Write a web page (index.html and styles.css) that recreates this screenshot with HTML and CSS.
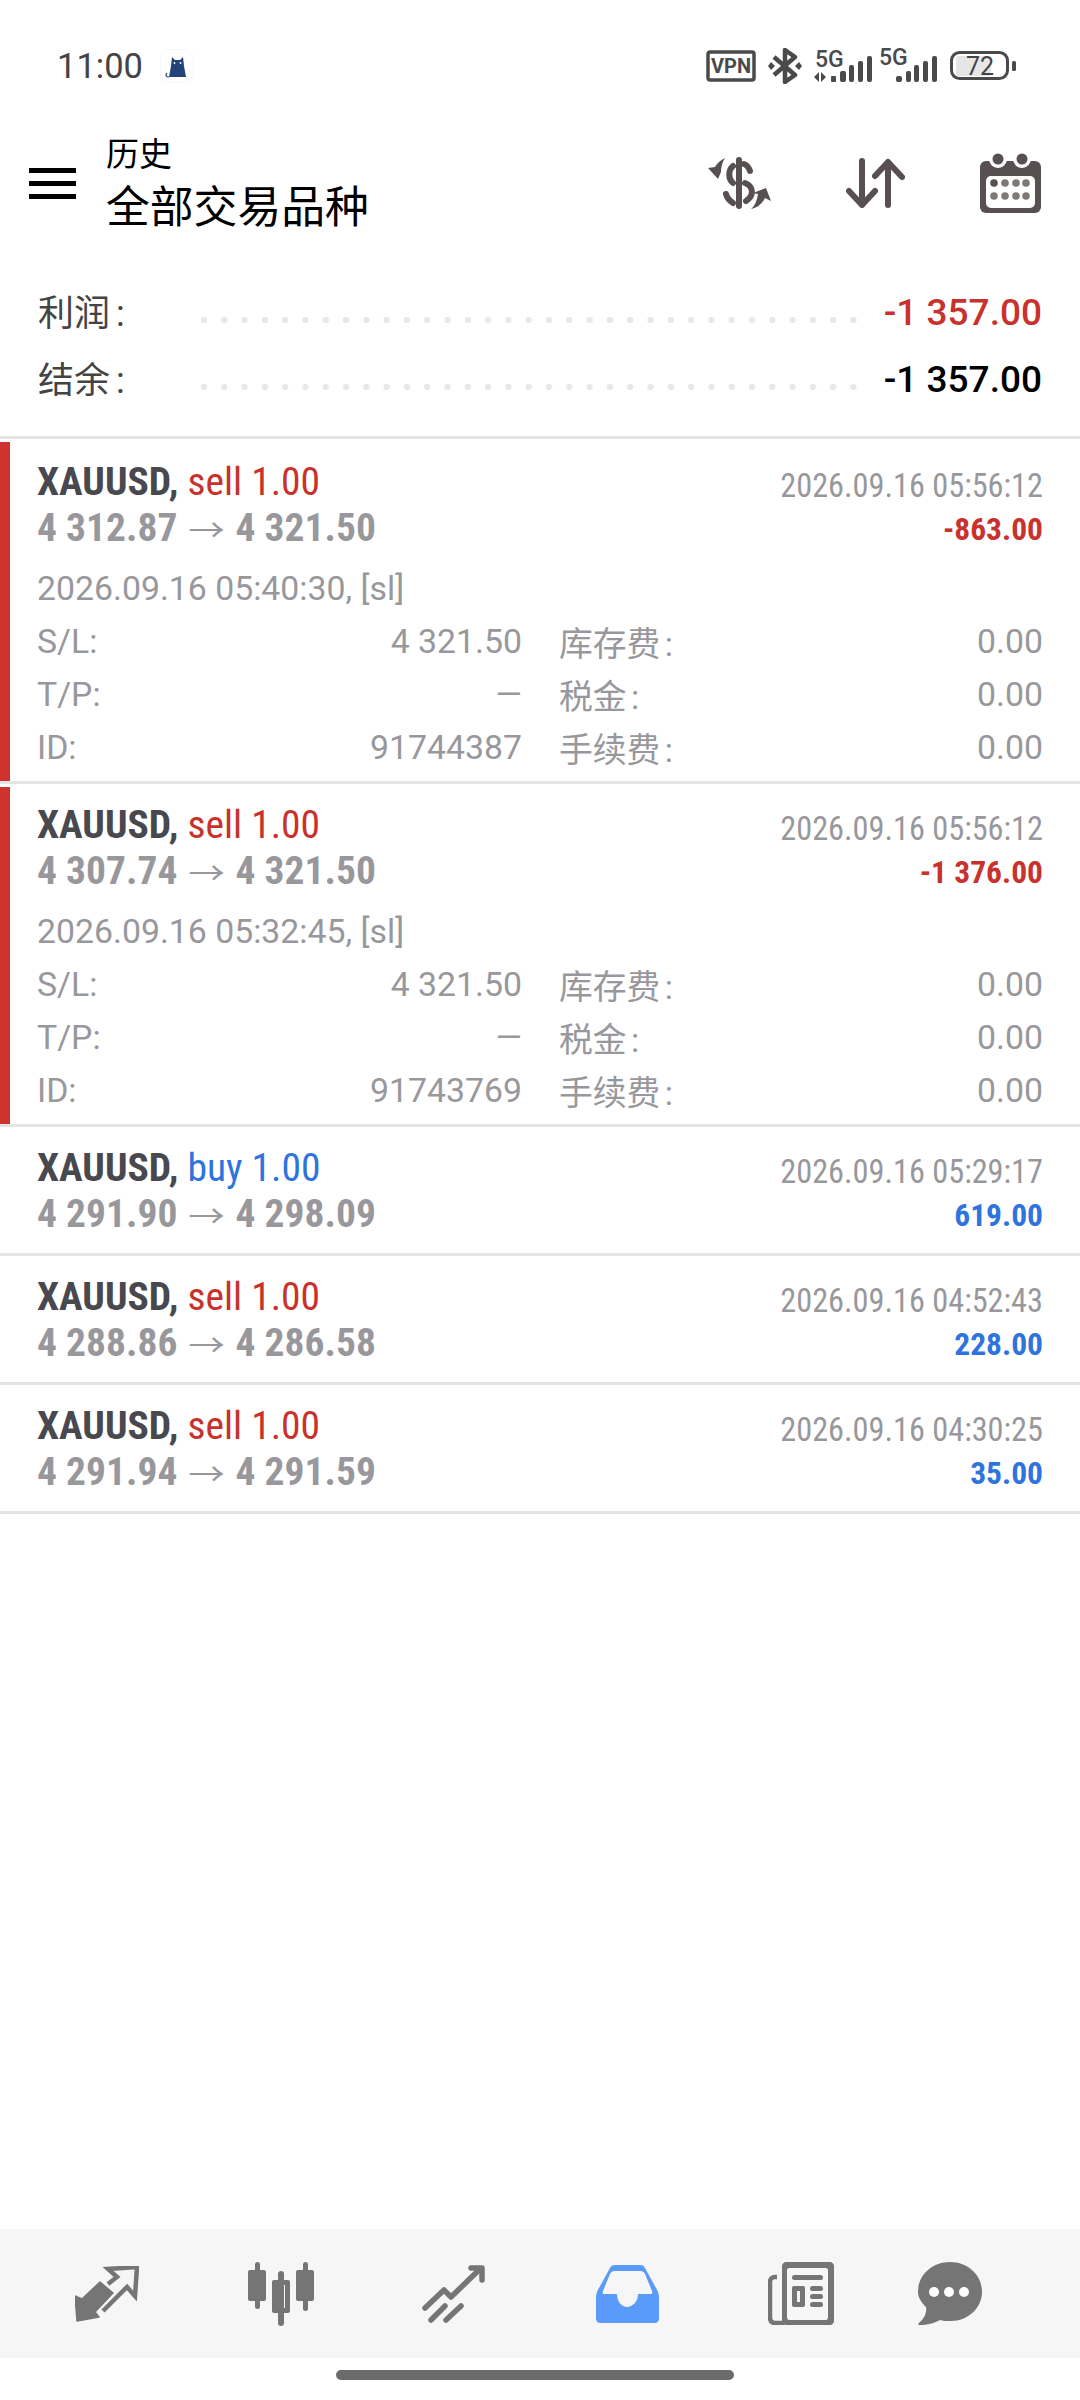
FILE: index.html
```html
<!DOCTYPE html>
<html lang="zh">
  <head>
    <meta charset="utf-8">
    <meta name="viewport" content="width=device-width,initial-scale=1.0">
    <title>历史</title>
    <link rel="stylesheet" href="styles.css">
  </head>
  <body>
    <div class="status-bar">
      <span class="clock">11:00</span>
      <svg class="cat" width="34" height="34" viewBox="0 0 34 34">
        <rect x="0.5" y="0.5" width="33" height="33" rx="10" fill="#fff" stroke="#f7f7f7"/>
        <path d="M12 8l3 3h5l3-3 1 9 2 11H9l2-11z" fill="#24427a"/>
        <path d="M9 28c-3 0-4-2-2-4" fill="none" stroke="#24427a" stroke-width="1.2"/>
        <circle cx="14.500" cy="14" r="0.900" fill="#fff"/>
        <circle cx="20.500" cy="14" r="0.900" fill="#fff"/>
      </svg>
      <div class="status-icons">
        <svg width="50" height="32" viewBox="0 0 50 32">
          <rect x="2" y="2" width="46" height="28" rx="2" fill="none" stroke="#4a4a4a" stroke-width="3.500"/>
          <text x="25" y="23" class="vpn-text" text-anchor="middle">VPN</text>
        </svg>
        <svg class="bt" width="34" height="36" viewBox="0 0 34 36">
          <path d="M6 9l21 18-10 7V2l10 7L6 27" fill="none" stroke="#4a4a4a" stroke-width="4.500" stroke-linejoin="round"/>
          <path d="M3 14l4 4-4 4-3-4zM31 14l3 4-3 4-4-4z" fill="#4a4a4a"/>
        </svg>
        <svg class="signal" width="60" height="44" viewBox="0 -6 60 44">
          <text x="2" y="17" class="sig-text">5G</text>
          <path d="M1 27l5-5v10zM8 22l5 5-5 5z" fill="#4a4a4a"/>
          <rect x="18" y="26" width="5" height="6" rx="1" fill="#4a4a4a"/>
          <rect x="27" y="21" width="6" height="11" rx="2" fill="#4a4a4a"/>
          <rect x="36" y="15" width="5" height="17" rx="2" fill="#4a4a4a"/>
          <rect x="45" y="11" width="5" height="21" rx="2" fill="#4a4a4a"/>
          <rect x="54" y="6" width="5" height="26" rx="2" fill="#4a4a4a"/>
        </svg>
        <svg class="signal" width="60" height="44" viewBox="0 -6 60 44">
          <text x="1" y="15" class="sig-text">5G</text>
          <rect x="18" y="26" width="6" height="6" rx="2" fill="#4a4a4a"/>
          <rect x="28" y="21" width="5" height="11" rx="2" fill="#4a4a4a"/>
          <rect x="36" y="15" width="5" height="17" rx="2" fill="#4a4a4a"/>
          <rect x="45" y="11" width="5" height="21" rx="2" fill="#4a4a4a"/>
          <rect x="54" y="6" width="5" height="26" rx="2" fill="#4a4a4a"/>
        </svg>
        <svg class="battery" width="66" height="30" viewBox="0 0 66 30">
          <rect x="6" y="5" width="35" height="20" rx="2" fill="#e6e6e6"/>
          <rect x="1.500" y="1.500" width="56" height="26" rx="8" fill="none" stroke="#4a4a4a" stroke-width="3"/>
          <rect x="62" y="10" width="4" height="10" rx="1.500" fill="#4a4a4a"/>
          <text x="30" y="24" class="bat-text" text-anchor="middle">72</text>
        </svg>
      </div>
    </div>

    <div class="toolbar">
      <div class="burger"><i></i><i></i><i></i></div>
      <div class="title-box">
        <div class="title-small">历史</div>
        <div class="title-big">全部交易品种</div>
      </div>
      <div class="toolbar-icons">
        <svg width="63" height="52" viewBox="0 0 63 52">
          <rect x="28" y="0" width="6" height="52" rx="3" fill="#585050"/>
          <g fill="none" stroke="#585050" stroke-width="6" stroke-linecap="round">
            <path d="M36 7c3 1 5 4 6 7"/>
            <path d="M25 9c-5 4-5 13 0 17"/>
            <path d="M37 26c8 3 10 12 1 18"/>
            <path d="M18 37c1 4 4 7 7 9"/>
          </g>
          <path d="M17 1C13 3 9 6 7 10L0 11l10 11 3-7c0-5 1-9 4-14zM43 52c4-3 6-9 7-15l-5-1 13-5 5 13-6-3c-3 6-8 10-14 11z" fill="#585050"/>
        </svg>
        <svg width="59" height="50" viewBox="0 0 59 50" class="sort-icon">
          <g fill="none" stroke="#585050" stroke-width="6" stroke-linecap="round" stroke-linejoin="round">
            <path d="M16 3v44M3 33l13 14 13-14"/>
            <path d="M42 47V4M29 18L42 4l14 15"/>
          </g>
        </svg>
        <svg width="61" height="60" viewBox="0 0 61 60">
          <rect x="0" y="8" width="61" height="52" rx="6" fill="#585050"/>
          <circle cx="18" cy="6" r="9" fill="#fff"/>
          <circle cx="42" cy="6" r="9" fill="#fff"/>
          <circle cx="18" cy="6" r="5.500" fill="#585050"/>
          <circle cx="42" cy="6" r="5.500" fill="#585050"/>
          <rect x="6" y="23" width="49" height="32" rx="5" fill="#fff"/>
          <circle cx="14" cy="30" r="3.800" fill="#585050"/>
          <g fill="#7f7976">
            <circle cx="25" cy="30" r="3.800"/><circle cx="36" cy="30" r="3.800"/><circle cx="46" cy="30" r="3.800"/>
            <circle cx="14" cy="43" r="3.800"/><circle cx="25" cy="43" r="3.800"/><circle cx="36" cy="43" r="3.800"/><circle cx="46" cy="43" r="3.800"/>
          </g>
        </svg>
      </div>
    </div>

    <div class="summary">
      <div class="summary-row">
        <span class="summary-label">利润 :</span>
        <span class="dots"></span>
        <span class="summary-value loss">-1 357.00</span>
      </div>
      <div class="summary-row">
        <span class="summary-label">结余 :</span>
        <span class="dots"></span>
        <span class="summary-value">-1 357.00</span>
      </div>
    </div>

    <div class="trades">
      <div class="trade open">
        <div class="trade-body">
          <div class="trade-head">
            <div>
              <div class="cond heading"><b>XAUUSD,</b> <span class="red">sell 1.00</span></div>
              <div class="cond prices"><b>4 312.87</b> <span class="arrow">→</span> <b>4 321.50</b></div>
            </div>
            <div class="trade-right">
              <div class="cond close-time">2026.09.16 05:56:12</div>
              <div class="cond profit red">-863.00</div>
            </div>
          </div>
          <div class="open-time">2026.09.16 05:40:30, [sl]</div>
          <div class="details">
            <div class="detail"><span>S/L:</span><span>4 321.50</span></div>
            <div class="detail"><span>库存费 :</span><span>0.00</span></div>
            <div class="detail"><span>T/P:</span><span>—</span></div>
            <div class="detail"><span>税金 :</span><span>0.00</span></div>
            <div class="detail"><span>ID:</span><span>91744387</span></div>
            <div class="detail"><span>手续费 :</span><span>0.00</span></div>
          </div>
        </div>
      </div>

      <div class="trade open">
        <div class="trade-body">
          <div class="trade-head">
            <div>
              <div class="cond heading"><b>XAUUSD,</b> <span class="red">sell 1.00</span></div>
              <div class="cond prices"><b>4 307.74</b> <span class="arrow">→</span> <b>4 321.50</b></div>
            </div>
            <div class="trade-right">
              <div class="cond close-time">2026.09.16 05:56:12</div>
              <div class="cond profit red">-1 376.00</div>
            </div>
          </div>
          <div class="open-time">2026.09.16 05:32:45, [sl]</div>
          <div class="details">
            <div class="detail"><span>S/L:</span><span>4 321.50</span></div>
            <div class="detail"><span>库存费 :</span><span>0.00</span></div>
            <div class="detail"><span>T/P:</span><span>—</span></div>
            <div class="detail"><span>税金 :</span><span>0.00</span></div>
            <div class="detail"><span>ID:</span><span>91743769</span></div>
            <div class="detail"><span>手续费 :</span><span>0.00</span></div>
          </div>
        </div>
      </div>

      <div class="trade">
        <div class="trade-body">
          <div class="trade-head">
            <div>
              <div class="cond heading"><b>XAUUSD,</b> <span class="blue">buy 1.00</span></div>
              <div class="cond prices"><b>4 291.90</b> <span class="arrow">→</span> <b>4 298.09</b></div>
            </div>
            <div class="trade-right">
              <div class="cond close-time">2026.09.16 05:29:17</div>
              <div class="cond profit blue">619.00</div>
            </div>
          </div>
        </div>
      </div>

      <div class="trade">
        <div class="trade-body">
          <div class="trade-head">
            <div>
              <div class="cond heading"><b>XAUUSD,</b> <span class="red">sell 1.00</span></div>
              <div class="cond prices"><b>4 288.86</b> <span class="arrow">→</span> <b>4 286.58</b></div>
            </div>
            <div class="trade-right">
              <div class="cond close-time">2026.09.16 04:52:43</div>
              <div class="cond profit blue">228.00</div>
            </div>
          </div>
        </div>
      </div>

      <div class="trade">
        <div class="trade-body">
          <div class="trade-head">
            <div>
              <div class="cond heading"><b>XAUUSD,</b> <span class="red">sell 1.00</span></div>
              <div class="cond prices"><b>4 291.94</b> <span class="arrow">→</span> <b>4 291.59</b></div>
            </div>
            <div class="trade-right">
              <div class="cond close-time">2026.09.16 04:30:25</div>
              <div class="cond profit blue">35.00</div>
            </div>
          </div>
        </div>
      </div>
    </div>

    <div class="bottom-nav">
      <svg width="64" height="56" viewBox="0 0 64 56">
        <path d="M0 30l7 3 18-17 13 11-18 19 4 5-22 4z" fill="#757575" stroke="#757575" stroke-width="1.500" stroke-linejoin="round"/>
        <path d="M33 18l9-7-9-8 29-2-2 29-8-9-24 24" fill="none" stroke="#757575" stroke-width="4.500"/>
      </svg>
      <svg width="67" height="64" viewBox="0 0 67 64">
        <g fill="#757575">
          <rect x="7" y="0" width="5" height="47" rx="2.500"/>
          <rect x="0" y="8" width="18" height="31" rx="2"/>
          <rect x="55" y="0" width="5" height="49" rx="2.500"/>
          <rect x="48" y="8" width="18" height="31" rx="2"/>
          <rect x="30" y="9" width="6" height="55" rx="3"/>
          <path fill-rule="evenodd" d="M26 18h14a2 2 0 0 1 2 2v29a2 2 0 0 1-2 2H26a2 2 0 0 1-2-2V20a2 2 0 0 1 2-2zm4 5v23h7V23z"/>
        </g>
      </svg>
      <svg class="nav-trend" width="63" height="58" viewBox="0 0 63 58">
        <g fill="none" stroke="#757575" stroke-width="5.500" stroke-linecap="round" stroke-linejoin="round">
          <path d="M3 43l19-18 7 7 29-28"/>
          <path d="M49 3h11v12"/>
          <path d="M23 41L9 55M39 41L24 55"/>
        </g>
      </svg>
      <svg width="63" height="58" viewBox="0 0 63 58">
        <path fill="#5a9bf9" fill-rule="evenodd" d="M19 0h25c3 0 4 1 5 3l11 20c2 3 3 6 3 10v21c0 2-2 4-4 4H4c-2 0-4-2-4-4V33c0-4 1-7 3-10L14 3c1-2 2-3 5-3zm0 6c-3 0-4 1-5 3L7 26c-1 2 0 3 2 3h12c0 8 5 13 10 13s11-5 11-13h12c2 0 3-1 2-3L49 9c-1-2-2-3-5-3z"/>
      </svg>
      <svg width="66" height="63" viewBox="0 0 66 63">
        <path fill="#757575" fill-rule="evenodd" d="M18 0h44c2 0 4 2 4 4v55c0 2-2 4-4 4H18c-2 0-4-2-4-4V4c0-2 2-4 4-4zm3 6c-1 0-2 1-2 2v47c0 2 1 3 2 3h37c1 0 2-1 2-3V8c0-1-1-2-2-2z"/>
        <path d="M9 15H7c-3 0-5 2-5 5v35c0 4 2 6 5 6h9" fill="none" stroke="#757575" stroke-width="4.500"/>
        <g fill="#757575">
          <rect x="24" y="13" width="31" height="5" rx="2.500"/>
          <path fill-rule="evenodd" d="M26 24h9a2 2 0 0 1 2 2v17a2 2 0 0 1-2 2h-9a2 2 0 0 1-2-2V26a2 2 0 0 1 2-2zm3 5v11h3V29z"/>
          <rect x="42" y="24" width="13" height="5" rx="2.500"/>
          <rect x="42" y="32" width="13" height="5" rx="2.500"/>
          <rect x="42" y="40" width="13" height="5" rx="2.500"/>
        </g>
      </svg>
      <svg class="chat" width="64" height="63" viewBox="0 0 64 63">
        <path fill="#757575" d="M32 0c18 0 32 13 32 30 0 16-14 29-31 29-5 0-8 0-11-1-5 3-13 5-21 5-1 0-1-1 0-2 5-4 8-10 7-16C3 40 0 35 0 30 0 13 14 0 32 0z"/>
        <circle cx="16" cy="30" r="5" fill="#fff"/>
        <circle cx="31" cy="30" r="5" fill="#fff"/>
        <circle cx="46" cy="30" r="5" fill="#fff"/>
      </svg>
    </div>
    <div class="home-area"><div class="home-bar"></div></div>
  </body>
</html>
```

FILE: styles.css
```css
body {
  margin: 0;
  width: 1080px;
  height: 2400px;
  display: flex;
  flex-direction: column;
  background: #fff;
  font-family: Roboto, "Noto Sans CJK SC", sans-serif;
  overflow: hidden;
}

svg { display: block; flex-shrink: 0; }

.red { color: #c9322c; }
.blue { color: #2f74de; }

/* status bar */
.status-bar {
  height: 68px;
  padding-top: 32px;
  padding-left: 57px;
  display: flex;
  align-items: center;
}
.clock { font-size: 34.5px; color: #444; }
.cat { margin-left: 17px; }
.status-icons {
  margin-left: auto;
  padding-right: 65px;
  display: flex;
  align-items: center;
  gap: 14px;
}
.status-icons .bt { margin-left: -2px; }
.status-icons .signal { margin-left: -3px; margin-right: -6px; }
.status-icons .battery { margin-left: 4.500px; margin-right: -1px; }
.vpn-text { font: 700 20px Roboto, sans-serif; fill: #4a4a4a; }
.sig-text { font: 500 23px Roboto, sans-serif; fill: #4a4a4a; }
.bat-text { font: 400 25px Roboto, sans-serif; fill: #444; }

/* toolbar */
.toolbar {
  padding: 29px 39px 42px 29px;
  display: flex;
  align-items: center;
}
.burger { width: 47px; margin-right: 30px; margin-top: 2px; display: flex; flex-direction: column; gap: 8px; }
.burger i { display: block; height: 5px; background: #000; }
.title-box { color: #000; }
.title-small { font-size: 33px; line-height: 51px; }
.title-big { font-size: 43.800px; line-height: 56px; }
.toolbar-icons { margin-left: auto; display: flex; align-items: center; gap: 75px; }

/* totals */
.summary { padding: 0 38px 24px; border-bottom: 3px solid #e4e4e4; }
.summary-row { height: 67px; display: flex; align-items: center; }
.summary-label { width: 162px; margin-top: -3px; font-size: 36px; color: #444; word-spacing: -3px; }
.dots {
  flex: 1;
  height: 8px;
  margin-top: 16px;
  margin-right: 26px;
  background: radial-gradient(circle at 4px 4px, #e8e8e8 3px, transparent 3.5px) left top / 20.3px 8px repeat-x;
}
.summary-value { font-size: 37px; font-weight: 500; color: #000; margin-top: 2px; }
.summary-value.loss { color: #c9322c; }

/* trade rows */
.trade { border-bottom: 3px solid #e4e4e4; }
.trade-body {
  margin-top: 3px;
  padding: 15px 37px 0 27px;
  border-left: 10px solid transparent;
}
.trade:first-child .trade-body { padding-top: 17px; }
.open .trade-body { border-left-color: #d0322e; }
.trade-head { display: flex; justify-content: space-between; margin-bottom: 16px; }
.open .trade-head { margin-bottom: 12px; }
.trade-right { text-align: right; padding-top: 4px; }

.cond { font-family: "Roboto Condensed", Roboto, sans-serif; font-stretch: condensed; white-space: nowrap; }
.heading { font-size: 39.500px; line-height: 46px; color: #48484f; }
.prices { height: 46px; font-size: 39.500px; line-height: 46px; color: #98989c; }
.arrow {
  display: inline-block;
  margin: 0 4.500px;
  font-family: "Noto Sans CJK SC", sans-serif;
  font-weight: 400;
  font-size: 31px;
  line-height: 1;
  transform: scaleX(1.18);
}
.close-time { font-size: 32.300px; line-height: 46px; color: #98989c; }
.profit { font-size: 31.500px; line-height: 42px; font-weight: 700; }

.open-time, .details { font-size: 33.800px; color: #98989c; }
.open-time { line-height: 52px; }
.details {
  padding-bottom: 7px;
  display: grid;
  grid-template-columns: 485px 1fr;
  grid-auto-rows: 53px;
  column-gap: 37px;
}
.detail { display: flex; justify-content: space-between; align-items: center; }
.detail span:first-child { word-spacing: -4px; margin-top: -1px; }

/* bottom */
.bottom-nav {
  margin-top: auto;
  height: 129px;
  padding-left: 75px;
  background: #f6f6f6;
  display: flex;
  align-items: center;
  gap: 109px;
}
.bottom-nav .nav-trend { margin: 0 2px 0 -2px; }
.bottom-nav .chat { margin-left: -25px; }
.home-area { height: 42px; padding: 12px 0 0 336px; box-sizing: border-box; }
.home-bar { width: 398px; height: 10px; border-radius: 5px; background: #6b6b6b; }
```
